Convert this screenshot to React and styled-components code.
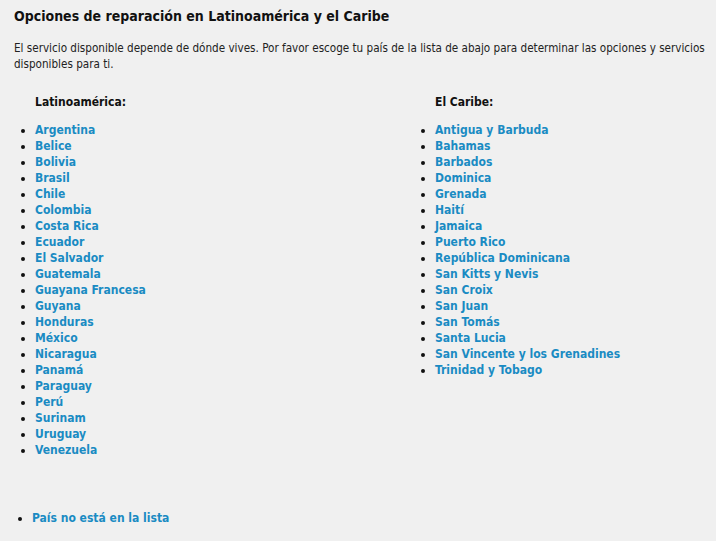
import React from "react";
import styled, { createGlobalStyle } from "styled-components";

const GlobalStyle = createGlobalStyle`
  html, body {
    margin: 0;
    padding: 0;
    background: #f0f0f0;
  }
  body {
    font-family: Tahoma, "DejaVu Sans Condensed", "DejaVu Sans", sans-serif;
    font-size: 12px;
    color: #222;
  }
`;

const Page = styled.div`
  padding: 6px 0 0 14px;
  height: 541px;
  box-sizing: border-box;
`;

const Title = styled.h1`
  font-size: 14px;
  font-weight: bold;
  color: #111;
  margin: 0 0 14px;
  line-height: 20px;
`;

const Intro = styled.p`
  margin: 0 0 22px;
  font-size: 11.6px;
  line-height: 16px;
`;

const Columns = styled.div`
  display: grid;
  grid-template-columns: 400px 1fr;
`;

const Region = styled.div`
  padding-left: 21px;
`;

const RegionTitle = styled.h2`
  font-size: 12px;
  font-weight: bold;
  color: #111;
  margin: 0 0 12px;
  line-height: 16px;
`;

const List = styled.ul`
  margin: 0;
  padding-left: ${(p) => p.$indent || 0}px;
  list-style: disc;
  li {
    line-height: 16px;
  }
  li::marker {
    color: #111;
  }
`;

const Link = styled.a`
  color: #1a8bc3;
  font-weight: bold;
  text-decoration: none;
`;

const Footer = styled.div`
  margin-top: 52px;
`;

const latam = [
  "Argentina", "Belice", "Bolivia", "Brasil", "Chile", "Colombia", "Costa Rica",
  "Ecuador", "El Salvador", "Guatemala", "Guayana Francesa", "Guyana", "Honduras",
  "México", "Nicaragua", "Panamá", "Paraguay", "Perú", "Surinam", "Uruguay", "Venezuela",
];

const caribe = [
  "Antigua y Barbuda", "Bahamas", "Barbados", "Dominica", "Grenada", "Haití",
  "Jamaica", "Puerto Rico", "República Dominicana", "San Kitts y Nevis", "San Croix",
  "San Juan", "San Tomás", "Santa Lucia", "San Vincente y los Grenadines", "Trinidad y Tobago",
];

const CountryList = ({ title, items }) => (
  <Region>
    <RegionTitle>{title}</RegionTitle>
    <List>
      {items.map((name) => (
        <li key={name}>
          <Link href="#">{name}</Link>
        </li>
      ))}
    </List>
  </Region>
);

export default function App() {
  return (
    <Page>
      <GlobalStyle />
      <Title>Opciones de reparación en Latinoamérica y el Caribe</Title>
      <Intro>
        El servicio disponible depende de dónde vives. Por favor escoge tu país de la
        lista de abajo para determinar las opciones y servicios disponibles para ti.
      </Intro>
      <Columns>
        <CountryList title="Latinoamérica:" items={latam} />
        <CountryList title="El Caribe:" items={caribe} />
      </Columns>
      <Footer>
        <List $indent={18}>
          <li>
            <Link href="#">País no está en la lista</Link>
          </li>
        </List>
      </Footer>
    </Page>
  );
}
